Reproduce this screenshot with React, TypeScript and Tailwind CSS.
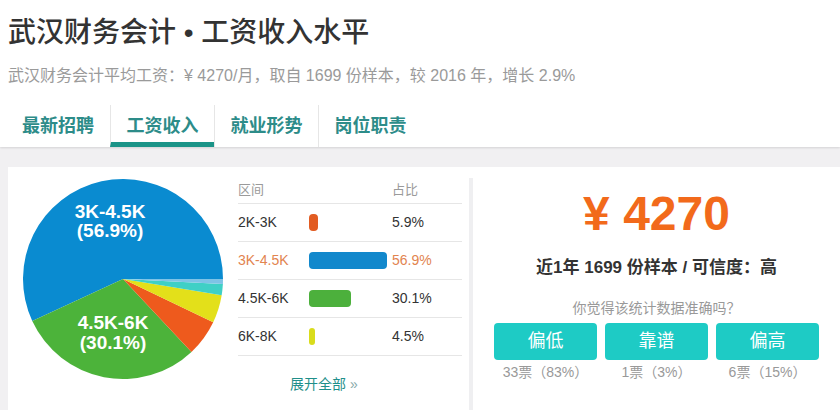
const cjk = "font-['Liberation_Sans','Noto_Sans_CJK_SC',sans-serif]"

const slices = [
  { pct: 56.9, color: "#0a8bd0" },
  { pct: 30.1, color: "#4cb33a" },
  { pct: 5.9, color: "#ee5a1d" },
  { pct: 4.5, color: "#e3e01a" },
  { pct: 1.8, color: "#3fd0c6" },
  { pct: 0.8, color: "#7ec3e6" },
]

const arc = (cx: number, cy: number, r: number, a0: number, a1: number) => {
  const p = (a: number) => [cx + r * Math.cos(a), cy - r * Math.sin(a)]
  const [x0, y0] = p(a0)
  const [x1, y1] = p(a1)
  const large = a1 - a0 > Math.PI ? 1 : 0
  return `M${cx},${cy} L${x0},${y0} A${r},${r} 0 ${large} 0 ${x1},${y1} Z`
}

const Pie = () => {
  let start = 0
  return (
    <svg width="202" height="202" viewBox="0 0 202 202">
      {slices.map((s, i) => {
        const a0 = start
        const a1 = start + (s.pct / 100) * Math.PI * 2
        start = a1
        return <path key={i} d={arc(101, 101, 100, a0, a1)} fill={s.color} />
      })}
      <text x="88" y="40" textAnchor="middle" fill="#fff" fontSize="19" fontWeight="700" fontFamily="Liberation Sans, sans-serif">3K-4.5K</text>
      <text x="88" y="59" textAnchor="middle" fill="#fff" fontSize="19" fontWeight="700" fontFamily="Liberation Sans, sans-serif">(56.9%)</text>
      <text x="91" y="151" textAnchor="middle" fill="#fff" fontSize="19" fontWeight="700" fontFamily="Liberation Sans, sans-serif">4.5K-6K</text>
      <text x="91" y="171" textAnchor="middle" fill="#fff" fontSize="19" fontWeight="700" fontFamily="Liberation Sans, sans-serif">(30.1%)</text>
    </svg>
  )
}

const rows = [
  { range: "2K-3K", bar: "w-[9px] bg-[#e25c22]", pct: "5.9%", hl: false },
  { range: "3K-4.5K", bar: "w-[78px] bg-[#1288cc]", pct: "56.9%", hl: true },
  { range: "4.5K-6K", bar: "w-[42px] bg-[#4cb03c]", pct: "30.1%", hl: false },
  { range: "6K-8K", bar: "w-[6px] bg-[#d9dc1c]", pct: "4.5%", hl: false },
]

const votes = [
  { label: "偏低", count: "33票（83%）" },
  { label: "靠谱", count: "1票（3%）" },
  { label: "偏高", count: "6票（15%）" },
]

const tabs = ["最新招聘", "工资收入", "就业形势", "岗位职责"]

export default function App() {
  return (
    <div className={`w-[840px] h-[410px] overflow-hidden bg-[#f1f0f2] ${cjk}`}>
      <div className="bg-white shadow-[0_1px_2px_rgba(0,0,0,0.12)]">
        <h1 className="pl-[8px] pt-[14px] text-[28px] leading-[38px] text-[#333] font-medium">
          武汉财务会计 • 工资收入水平
        </h1>
        <p className="pl-[8px] mt-[14px] text-[16px] leading-[20px] text-[#9a9a9a]">
          武汉财务会计平均工资：¥ 4270/月，取自 1699 份样本，较 2016 年，增长 2.9%
        </p>
        <div className="flex pl-[6px] mt-[19px]">
          {tabs.map((t, i) => (
            <div
              key={t}
              className={`w-[104px] h-[42px] flex items-center justify-center text-[18px] font-bold text-[#2d8c89] ${
                i > 0 ? "border-l border-[#e6e6e6]" : ""
              } ${i === 1 ? "border-b-[5px] border-b-[#1b9488] pt-[5px]" : ""}`}
            >
              {t}
            </div>
          ))}
        </div>
      </div>

      <div className="mt-[20px] ml-[8px] bg-white h-[260px] flex">
        <div className="pl-[14px] pt-[11px] w-[230px]">
          <Pie />
        </div>

        <div className="w-[224px] pt-[10px]">
          <div className="flex h-[27px] items-center border-b border-[#e6e6e6] text-[13px] text-[#9a9a9a]">
            <span className="w-[154px]">区间</span>
            <span>占比</span>
          </div>
          {rows.map((r) => (
            <div
              key={r.range}
              className={`flex h-[38px] items-center border-b border-[#e6e6e6] text-[14px] ${
                r.hl ? "text-[#e2844f]" : "text-[#333]"
              }`}
            >
              <span className="w-[71px]">{r.range}</span>
              <span className="w-[83px]">
                <span className={`block h-[17px] rounded-[4px] ${r.bar}`} />
              </span>
              <span>{r.pct}</span>
            </div>
          ))}
          <div className="pl-[52px] mt-[18px] text-[14px] text-[#1f8f8a]">
            展开全部 <span className="text-[#8aa]">»</span>
          </div>
        </div>

        <div className="mt-[11px] ml-[7px] w-[4px] bg-[#efeff1]" />

        <div className="flex-1 flex flex-col items-center">
          <div className="mt-[20px] text-[48px] leading-[54px] font-bold text-[#f26a1b] font-['Liberation_Sans',sans-serif]">
            ¥ 4270
          </div>
          <div className="mt-[15px] text-[17px] leading-[24px] font-bold text-[#333]">
            近1年 1699 份样本 / 可信度：高
          </div>
          <div className="mt-[18px] text-[14px] leading-[20px] text-[#999]">
            你觉得该统计数据准确吗？
          </div>
          <div className="mt-[5px] flex gap-[8px]">
            {votes.map((v) => (
              <div key={v.label} className="w-[103px] flex flex-col items-center">
                <button className="w-full h-[37px] rounded-[4px] bg-[#1ecbc5] text-white text-[18px]">
                  {v.label}
                </button>
                <span className="mt-[3px] text-[14px] leading-[18px] text-[#999]">{v.count}</span>
              </div>
            ))}
          </div>
        </div>
      </div>
    </div>
  )
}
